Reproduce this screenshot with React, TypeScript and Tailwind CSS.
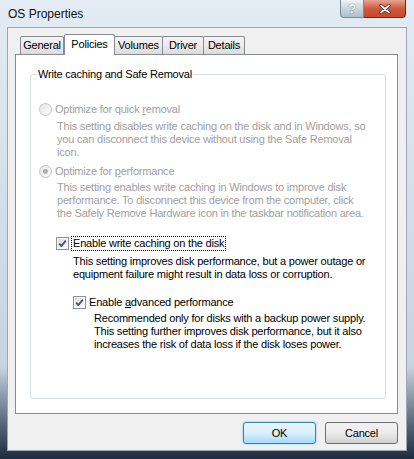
import React from 'react';

const Radio: React.FC<{ checked?: boolean }> = ({ checked = false }) => (
  <span className="w-[13px] h-[13px] shrink-0 rounded-full border border-[#c4c4c4] bg-gradient-to-br from-[#e6e6e6] to-[#fbfbfb] flex items-center justify-center">
    {checked && <span className="w-[5px] h-[5px] rounded-full bg-gradient-to-br from-[#9a9a9a] to-[#c8c8c8]" />}
  </span>
);

const CheckBox: React.FC = () => (
  <span className="w-[13px] h-[13px] shrink-0 border border-[#8e8f8f] bg-white p-[1px] flex">
    <span className="flex-1 bg-gradient-to-br from-[#dcdcdc] to-[#fcfcfc] flex items-center justify-center">
      <svg width="9" height="9" viewBox="0 0 9 9">
        <path d="M1.2 4.6 L3.5 7 L7.8 1.6" fill="none" stroke="#3e5596" strokeWidth="1.9" strokeLinejoin="round" />
      </svg>
    </span>
  </span>
);

// lines broken as in the dialog
const Lines: React.FC<{ lines: string[]; className: string }> = ({ lines, className }) => (
  <div className={className}>
    {lines.map((l) => (
      <div key={l} className="whitespace-nowrap">
        {l}
      </div>
    ))}
  </div>
);

const tabs = [
  { name: 'General', w: 'w-[44px]' },
  { name: 'Policies', w: 'w-[51px]', active: true },
  { name: 'Volumes', w: 'w-[49px]' },
  { name: 'Driver', w: 'w-[42px]' },
  { name: 'Details', w: 'w-[42px]' },
];

export default function App() {
  return (
    <div className="w-[414px] h-[459px] flex flex-col overflow-hidden bg-gradient-to-b from-[#e3ecf3] via-[#c6d4df] via-80% to-[#1d2d3f] font-['Liberation_Sans',Arial,sans-serif] text-[11px] tracking-[-0.2px] text-black">
      {/* title bar */}
      <div className="h-[27px] flex justify-between pl-[8px] pr-[8px] shrink-0">
        <div className="pt-[6px] text-[12px] leading-[16px] tracking-normal text-[#111]">OS Properties</div>
        <div className="flex h-[18px]">
          <div className="w-[24px] h-[18px] rounded-bl-[4px] border border-[#7a8a99] border-t-0 bg-gradient-to-b from-[#eef3f7] via-[#c9d5de] to-[#aebfcc] flex items-center justify-center text-[13px] font-bold text-[#f7f9fb] [text-shadow:0_0_1px_#455566]">
            ?
          </div>
          <div className="w-[42px] h-[18px] rounded-br-[4px] border border-[#6b2a1e] border-t-0 border-l-0 bg-gradient-to-b from-[#e8a493] via-[#cf5a3e] to-[#c8452b] flex items-center justify-center">
            <svg width="12" height="10" viewBox="0 0 12 10">
              <path d="M2 1.5 L10 8.5 M10 1.5 L2 8.5" stroke="#4a1a12" strokeWidth="3.2" strokeLinecap="round" />
              <path d="M2 1.5 L10 8.5 M10 1.5 L2 8.5" stroke="#ffffff" strokeWidth="1.8" strokeLinecap="round" />
            </svg>
          </div>
        </div>
      </div>

      {/* client area */}
      <div className="mx-[7px] mb-[8px] flex-1 border border-[#9aa8b5] bg-[#f0f0f0] flex flex-col pl-[7px] pr-[8px] pt-[6px]">
        {/* tab strip */}
        <div className="flex items-end h-[20px] pl-[5px] relative z-10">
          {tabs.map((t) =>
            t.active ? (
              <div
                key={t.name}
                className={`${t.w} h-[21px] -mb-px bg-white border border-[#898c95] border-b-0 rounded-t-[2px] flex items-start justify-center pt-[3px] leading-[13px]`}
              >
                {t.name}
              </div>
            ) : (
              <div
                key={t.name}
                className={`${t.w} h-[18px] bg-gradient-to-b from-[#f3f3f3] via-[#ebebeb] to-[#dbdbdb] border border-[#898c95] border-b-0 -ml-px first:ml-0 rounded-t-[2px] flex items-center justify-center leading-[13px]`}
              >
                {t.name}
              </div>
            )
          )}
        </div>

        {/* tab panel */}
        <div className="h-[360px] border border-[#898c95] bg-white flex flex-col pl-[14px] pr-[11px] pt-[13px] pb-[14px]">
          <fieldset className="flex-1 border border-[#d5dfe5] rounded-[3px] pl-[6px] pr-[6px]">
            <legend className="px-[1px] leading-[13px]">Write caching and Safe Removal</legend>

            <div className="ml-[2px] mt-[22px] leading-[13px]">
              <div className="flex items-center gap-[3px] text-[#a0a0a0]">
                <Radio />
                <span>
                  Optimize for quick <u className="underline-offset-1">r</u>emoval
                </span>
              </div>
              <Lines
                className="pl-[18px] mt-[4px] text-[#a0a0a0]"
                lines={[
                  'This setting disables write caching on the disk and in Windows, so',
                  'you can disconnect this device without using the Safe Removal',
                  'icon.',
                ]}
              />

              <div className="flex items-center gap-[3px] text-[#a0a0a0] mt-[6px]">
                <Radio checked />
                <span>
                  Optimize for <u className="underline-offset-1">p</u>erformance
                </span>
              </div>
              <Lines
                className="pl-[18px] mt-[3px] text-[#a0a0a0]"
                lines={[
                  'This setting enables write caching in Windows to improve disk',
                  'performance. To disconnect this device from the computer, click',
                  'the Safely Remove Hardware icon in the taskbar notification area.',
                ]}
              />

              <div className="flex items-center gap-[2px] ml-[17px] mt-[16px]">
                <CheckBox />
                <span className="border border-dotted border-black px-[1px]">Enable write caching on the disk</span>
              </div>
              <Lines
                className="pl-[34px] mt-[4px]"
                lines={[
                  'This setting improves disk performance, but a power outage or',
                  'equipment failure might result in data loss or corruption.',
                ]}
              />

              <div className="flex items-center gap-[3px] ml-[34px] mt-[15px]">
                <CheckBox />
                <span>
                  Enable <u className="underline-offset-1">a</u>dvanced performance
                </span>
              </div>
              <Lines
                className="pl-[55px] mt-[3px]"
                lines={[
                  'Recommended only for disks with a backup power supply.',
                  'This setting further improves disk performance, but it also',
                  'increases the risk of data loss if the disk loses power.',
                ]}
              />
            </div>
          </fieldset>
        </div>

        {/* buttons */}
        <div className="flex justify-end gap-[9px] mt-[8px]">
          <button className="w-[73px] h-[22px] rounded-[3px] border border-[#3c7fb1] bg-gradient-to-b from-[#eaf6fd] via-[#d9f0fc] to-[#a7d9f5] shadow-[0_0_2px_#5fc4f0] leading-[13px]">
            OK
          </button>
          <button className="w-[73px] h-[22px] rounded-[3px] border border-[#707070] bg-gradient-to-b from-[#f2f2f2] via-[#ebebeb] to-[#cfcfcf] leading-[13px]">
            Cancel
          </button>
        </div>
      </div>
    </div>
  );
}
